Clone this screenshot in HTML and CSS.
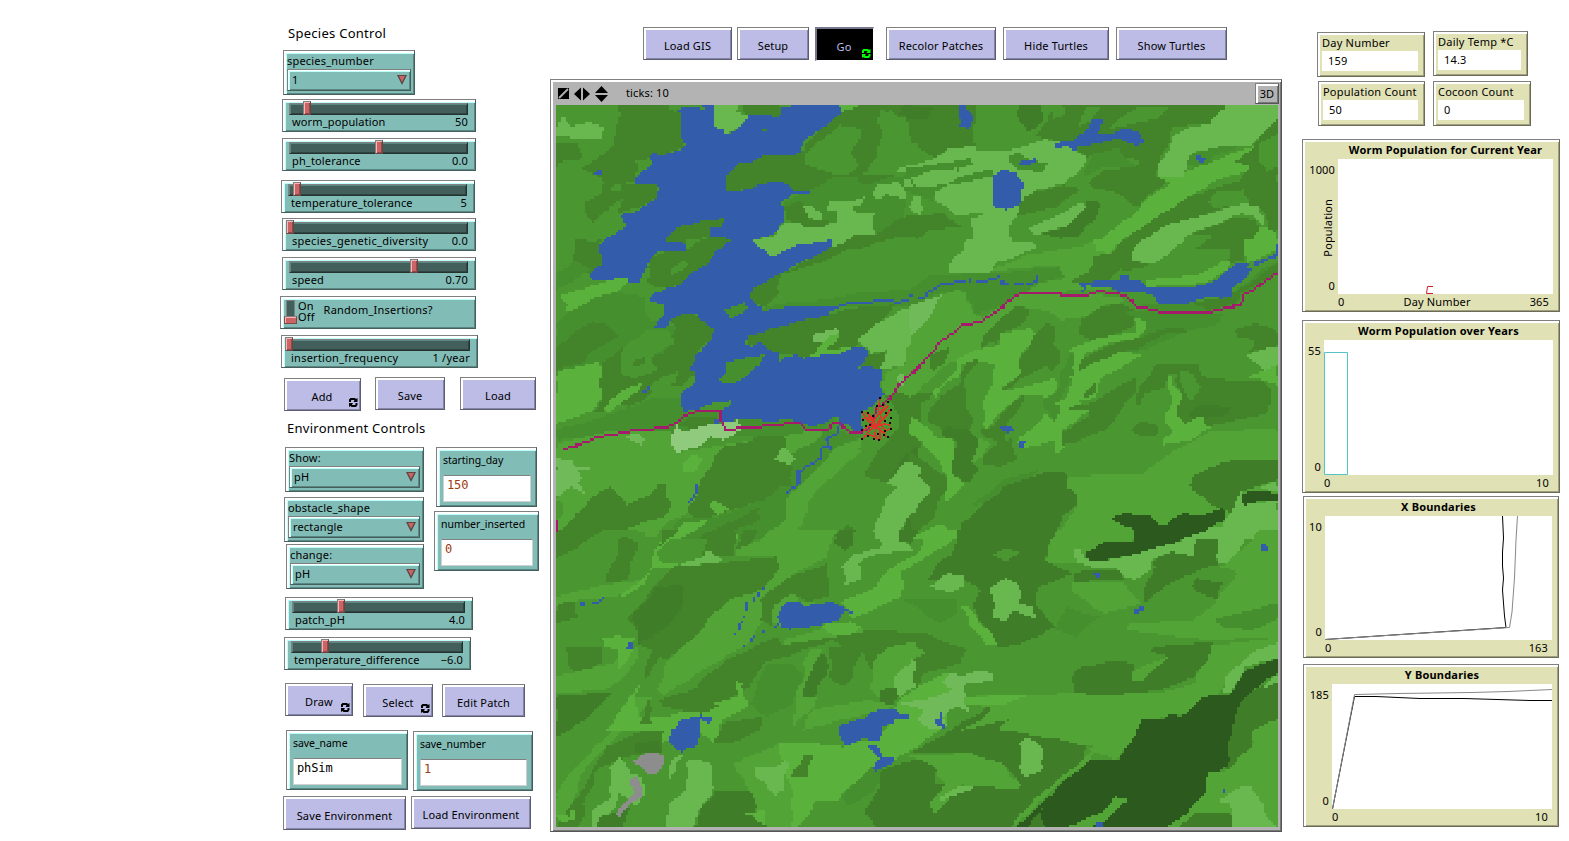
FILE: index.html
```html
<!DOCTYPE html>
<html lang="en">
<head>
<meta charset="utf-8">
<title>Worm Model</title>
<link rel="stylesheet" href="styles.css">
</head>
<body>
<svg class="defs" width="0" height="0">
  <symbol id="loop" viewBox="0 0 9 9"><path d="M0 4V1.5L1.5 0H6L7 1L8.500 0V4H4.500L5.500 2.500L5 2H2.500L2 2.500V4ZM0 5H4L3 6.500L3.500 7H6L6.500 6.500V5H8.500V7L7 9H2.500L1.500 8L0 9Z"/></symbol>
</svg>
<div class="app">
  <section class="controls">
    <h2 class="note note-species">Species Control</h2>
    <div class="widget chooser ch-species"><span>species_number</span><div class="pick"><span>1</span><i class="tri"></i></div></div>
    <div class="widget slider s1"><div class="track"><i class="knob"></i></div><p><span>worm_population</span><span>50</span></p></div>
    <div class="widget slider s2"><div class="track"><i class="knob"></i></div><p><span>ph_tolerance</span><span>0.0</span></p></div>
    <div class="widget slider s3"><div class="track"><i class="knob"></i></div><p><span>temperature_tolerance</span><span>5</span></p></div>
    <div class="widget slider s4"><div class="track"><i class="knob"></i></div><p><span>species_genetic_diversity</span><span>0.0</span></p></div>
    <div class="widget slider s5"><div class="track"><i class="knob"></i></div><p><span>speed</span><span>0.70</span></p></div>
    <div class="widget switch"><div class="groove"><i></i></div><div class="onoff"><span>On</span><span>Off</span></div><span class="sw-name">Random_Insertions?</span></div>
    <div class="widget slider s6"><div class="track"><i class="knob"></i></div><p><span>insertion_frequency</span><span>1 /year</span></p></div>
    <div class="row row-add">
      <button class="btn b-add">Add<svg class="loop"><use href="#loop"/></svg></button>
      <button class="btn b-save">Save</button>
      <button class="btn b-load">Load</button>
    </div>
    <h2 class="note note-env">Environment Controls</h2>
    <div class="row row-env">
      <div class="stack">
        <div class="widget chooser ch-show"><span>Show:</span><div class="pick"><span>pH</span><i class="tri"></i></div></div>
        <div class="widget chooser ch-shape"><span>obstacle_shape</span><div class="pick"><span>rectangle</span><i class="tri"></i></div></div>
        <div class="widget chooser ch-change"><span>change:</span><div class="pick"><span>pH</span><i class="tri"></i></div></div>
      </div>
      <div class="stack">
        <div class="widget input in-day"><span>starting_day</span><div class="field num">150</div></div>
        <div class="widget input in-num"><span>number_inserted</span><div class="field num">0</div></div>
      </div>
    </div>
    <div class="widget slider s7"><div class="track"><i class="knob"></i></div><p><span>patch_pH</span><span>4.0</span></p></div>
    <div class="widget slider s8"><div class="track"><i class="knob"></i></div><p><span>temperature_difference</span><span>−6.0</span></p></div>
    <div class="row row-draw">
      <button class="btn b-draw">Draw<svg class="loop"><use href="#loop"/></svg></button>
      <button class="btn b-select">Select<svg class="loop"><use href="#loop"/></svg></button>
      <button class="btn b-edit">Edit Patch</button>
    </div>
    <div class="row row-name">
      <div class="widget input in-name"><span>save_name</span><div class="field">phSim</div></div>
      <div class="widget input in-snum"><span>save_number</span><div class="field num">1</div></div>
    </div>
    <div class="row row-envbtn">
      <button class="btn b-senv">Save Environment</button>
      <button class="btn b-lenv">Load Environment</button>
    </div>
  </section>

  <main class="world">
    <nav class="toolbar">
      <button class="btn b-gis">Load GIS</button>
      <button class="btn b-setup">Setup</button>
      <button class="btn b-go">Go<svg class="loop"><use href="#loop"/></svg></button>
      <button class="btn b-recolor">Recolor Patches</button>
      <button class="btn b-hide">Hide Turtles</button>
      <button class="btn b-show">Show Turtles</button>
    </nav>
    <div class="view">
      <header class="viewbar">
        <svg width="52" height="16" viewBox="0 0 52 16"><path d="M0 2H11V13H0Z"/><path d="M1 12L10 3" stroke="#b3b3b3" stroke-width="1.800"/><path d="M16 8L23 1.500V14.500ZM32 8L25 1.500V14.500ZM37 7L43.500 0L50 7ZM37 9L43.500 16L50 9Z"/></svg>
        <span class="ticks">ticks: 10</span>
        <button class="threed">3D</button>
      </header>
      <div class="map">
        <canvas id="patches" width="301" height="301"></canvas>
        <svg class="turtles" viewBox="860 395 34 48" width="34" height="48">
          <path class="trail" d="M876 426L881 417 878 409 880 399M876 426L882 420 887 415 890 409M876 426L884 424 890 425M876 426L883 432 886 437M876 426L875 434 878 440M876 426L870 430 863 439M876 426L868 421 862 412M876 426L869 426 863 431M876 426L872 418 868 414M884 405L880 414 888 406M884 432L891 428M874 422L867 418 862 419M878 421L886 431M876 437L870 435 864 436M880 440L880 429 873 428M866 412L873 422 879 413"/>
          <path class="bug" d="M879 397h2v2h-2zM887 401h2v2h-2zM882 404h2v2h-2zM890 409h2v2h-2zM885 412h2v2h-2zM876 405h2v2h-2zM861 411h2v2h-2zM867 412h2v2h-2zM862 419h2v2h-2zM872 415h2v2h-2zM890 417h2v2h-2zM889 422h2v2h-2zM890 428h2v2h-2zM884 430h2v2h-2zM887 436h2v2h-2zM883 434h2v2h-2zM878 439h2v2h-2zM873 438h2v2h-2zM861 438h2v2h-2zM861 429h2v2h-2zM867 435h2v2h-2zM869 424h2v2h-2zM865 425h2v2h-2zM884 420h2v2h-2zM877 433h2v2h-2z"/>
        </svg>
      </div>
    </div>
  </main>

  <aside class="outputs">
    <div class="monitors">
      <div class="out monitor m-day"><span>Day Number</span><div>159</div></div>
      <div class="out monitor m-temp"><span>Daily Temp *C</span><div>14.3</div></div>
      <div class="out monitor m-pop"><span>Population Count</span><div>50</div></div>
      <div class="out monitor m-coc"><span>Cocoon Count</span><div>0</div></div>
    </div>
    <div class="out plot p1">
      <h3>Worm Population for Current Year</h3>
      <div class="yaxis"><span>1000</span><span class="yname">Population</span><span>0</span></div>
      <svg class="area" viewBox="0 0 215 135"><path d="M95 127.500H89.500L88.500 134.500H95" stroke="#c8202c" fill="none"/></svg>
      <div class="xaxis"><span>0</span><span>Day Number</span><span>365</span></div>
    </div>
    <div class="out plot p2">
      <h3>Worm Population over Years</h3>
      <div class="yaxis"><span>55</span><span>0</span></div>
      <svg class="area" viewBox="0 0 229 135"><path d="M0.500 12.500H23.500V134.500H0.500Z" stroke="#54c4c4" fill="none"/></svg>
      <div class="xaxis"><span>0</span><span>10</span></div>
    </div>
    <div class="out plot p3">
      <h3>X Boundaries</h3>
      <div class="yaxis"><span>10</span><span>0</span></div>
      <svg class="area" viewBox="0 0 227 124" fill="none"><path d="M0 123.500L181 111.500L179.500 100L177.500 74L178.500 62L177.500 50V36L178.500 22L177.500 0" stroke="#000"/><path d="M0 123.500L184.500 111.500L187 96L189.500 62L191 24L192.500 0" stroke="#888"/></svg>
      <div class="xaxis"><span>0</span><span>163</span></div>
    </div>
    <div class="out plot p4">
      <h3>Y Boundaries</h3>
      <div class="yaxis"><span>185</span><span>0</span></div>
      <svg class="area" viewBox="0 0 220 125" fill="none"><path d="M0.500 125L22.500 12.500H44L88 14.500H132L198 16.500H220" stroke="#000"/><path d="M0.500 125L22.500 10.500L66 9.500L140 8.500L176 7.500L220 5.500" stroke="#888"/></svg>
      <div class="xaxis"><span>0</span><span>10</span></div>
    </div>
  </aside>
</div>
<script src="terrain.js"></script>
</body>
</html>
```
FILE: styles.css
```css
* { box-sizing: border-box; }
body { margin: 0; background: #fff; color: #000; font: 11px/14px "Noto Sans", "DejaVu Sans", sans-serif; letter-spacing: .15px; overflow: hidden; }
h2, h3, p { margin: 0; }
.defs { position: absolute; }
.app { display: flex; width: 1569px; height: 841px; }
.controls { width: 550px; padding: 26px 0 0 280px; display: flex; flex-direction: column; align-items: flex-start; }
.row { display: flex; align-items: flex-start; }
.stack { display: flex; flex-direction: column; align-items: flex-start; }

.note { font-weight: 400; font-size: 13px; line-height: 14px; letter-spacing: .27px; white-space: nowrap; }
.note-species { margin: 0 0 10px 8px; }
.note-env { margin: 10px 0 12px 7px; }

.widget { background: #82bcb6; border: 1px solid #808080; border-right-color: #465f5c; border-bottom-color: #465f5c; box-shadow: inset 1px 1px #fff, inset 2px 2px #fff, inset 3px 3px #bdfffa, inset -1px -1px #5a8782; white-space: nowrap; }

.chooser { width: 140px; height: 45px; padding: 4px 3px 3px 3px; }
.chooser > span { display: block; height: 14px; line-height: 12px; letter-spacing: .2px; }
.pick { display: flex; align-items: center; justify-content: space-between; height: 22px; padding: 0 3px 0 4px; border: 1px solid #808080; border-right-color: #465f5c; border-bottom-color: #465f5c; box-shadow: inset 1px 1px #fff, inset 2px 2px #bdfffa, inset -1px -1px #5a8782; }
.tri { width: 10px; height: 10px; background: #5b4645; clip-path: polygon(0 0, 100% 0, 50% 100%); position: relative; }
.tri::after { content: ""; position: absolute; inset: 1px 2px 3px; background: #cb6464; clip-path: polygon(0 0, 100% 0, 50% 100%); }
.ch-species { width: 132px; margin-left: 3px; }
.ch-show { width: 139px; margin-left: 5px; }
.ch-shape { width: 140px; margin: 5px 0 2px 4px; }
.ch-change { width: 138px; margin-left: 6px; }

.slider { width: 194px; height: 33px; padding: 3px 7px 0 6px; }
.track { height: 12px; background: #435f5b; border: 1px solid #808080; border-right-color: #243330; border-bottom-color: #243330; box-shadow: inset 1px 1px #5a8782, inset -1px -1px #304542; }
.knob { display: block; width: 8px; height: 14px; margin-top: -3px; background: #cb6464; border: 1px solid #6a4545; border-top-color: #808080; border-left-color: #808080; box-shadow: inset 1px 1px #ffb4b4, inset -1px -1px #934848; }
.slider p { display: flex; justify-content: space-between; padding: 0 0 0 3px; line-height: 14px; }
.s1 { margin: 4px 0 0 2px; } .s1 .knob { margin-left: 13px; }
.s2 { margin: 6px 0 0 2px; } .s2 .knob { margin-left: 85px; }
.s3 { margin: 9px 0 0 1px; } .s3 .knob { margin-left: 4px; }
.s4 { margin: 5px 0 0 2px; } .s4 .knob { margin-left: -4px; }
.s4 p { letter-spacing: .28px; }
.s5 { margin: 6px 0 0 2px; } .s5 .knob { margin-left: 120px; }
.s6 { width: 197px; margin: 6px 0 0 1px; } .s6 .knob { margin-left: -4px; }
.s6 p { letter-spacing: .25px; }
.s7 { width: 188px; margin: 8px 0 0 5px; } .s7 .knob { margin-left: 44px; }
.s8 { width: 187px; margin: 7px 0 0 4px; } .s8 .knob { margin-left: 29px; }

.switch { display: flex; width: 196px; height: 33px; margin-top: 6px; padding: 3px 4px; }
.groove { width: 9px; height: 22px; margin-left: 1px; background: #435f5b; border: 1px solid #808080; }
.groove i { display: block; width: 13px; height: 8px; margin: 15px 0 0 -3px; background: #cb6464; border: 1px solid #7c4848; border-top-color: #808080; box-shadow: inset 1px 1px #ffb4b4; }
.onoff { display: flex; flex-direction: column; margin-left: 3px; line-height: 11px; }
.sw-name { margin: 3px 0 0 9px; letter-spacing: .22px; }

.btn { display: flex; align-items: center; justify-content: center; position: relative; height: 33px; padding: 5px 0 0; font: inherit; letter-spacing: inherit; color: #000; background: #bcbce6; border: 1px solid #808080; border-right-color: #5c5c72; border-bottom-color: #5c5c72; box-shadow: inset 1px 1px #fff, inset 2px 2px #fff, inset -1px -1px #8585a6; white-space: nowrap; }
.loop { position: absolute; right: 2px; bottom: 3px; width: 9px; height: 9px; }
.row-add { margin: 9px 0 0 4px; }
.b-add { width: 77px; margin: 1px 14px 0 0; padding-right: 1px; }
.b-save { width: 70px; margin-right: 15px; }
.b-load { width: 76px; }
.row-env { gap: 10px; }
.input { height: 60px; padding: 6px 5px 0 6px; letter-spacing: 0; }
.input > span { display: block; height: 21px; line-height: 12px; font-size: 10.5px; letter-spacing: -.05px; }
.field { height: 27px; padding: 1px 3px; background: #fff; border: 1px solid #d0d0d0; border-top-color: #808080; font: 12px/17px "DejaVu Sans Mono", monospace; letter-spacing: -.1px; }
.num { color: #9c3a0e; }
.in-day { width: 101px; margin-left: 2px; }
.in-num { width: 105px; margin-top: 4px; }
.row-draw { margin: 13px 0 0 5px; }
.b-draw { width: 68px; margin-right: 10px; }
.b-select { width: 70px; margin: 1px 9px 0 0; }
.b-edit { width: 83px; margin-top: 1px; }
.row-name { margin: 13px 0 0 6px; }
.in-name { width: 122px; margin-right: 5px; }
.in-snum { width: 120px; margin-top: 1px; }
.row-envbtn { margin: 5px 0 0 3px; }
.b-senv { width: 123px; height: 34px; margin-right: 5px; }
.b-lenv { width: 120px; }

.world { width: 732px; padding-top: 27px; }
.toolbar { display: flex; height: 52px; padding-left: 93px; align-items: flex-start; }
.b-gis { width: 89px; margin-right: 5px; }
.b-setup { width: 72px; margin-right: 6px; }
.b-go { width: 59px; height: 34px; margin-right: 12px; padding: 5px 2px 0 0; background: #000; color: #bcbce6; border: 2px solid #76768f; border-right: 1px solid #fff; border-bottom: 1px solid #fff; box-shadow: none; }
.b-go .loop { fill: #0f0; right: 2px; bottom: 2px; }
.b-recolor { width: 110px; margin-right: 7px; }
.b-hide { width: 106px; margin-right: 7px; }
.b-show { width: 111px; }
.view { width: 732px; height: 753px; padding: 2px 2px 2px 5px; background: #b3b3b3; border: 1px solid #808080; border-right-color: #555; border-bottom-color: #555; box-shadow: inset 2px 2px #fff, inset -1px -1px #777; }
.viewbar { display: flex; align-items: center; height: 23px; padding: 0 0 0 2px; }
.ticks { margin: -1px 0 0 16px; flex: 1; }
.threed { width: 24px; height: 21px; padding: 0; background: #b3b3b3; font: 11px/16px "Noto Sans", sans-serif; border: 1px solid #808080; border-right-color: #555; border-bottom-color: #555; box-shadow: inset 2px 2px #fff, inset -1px -1px #777; }
.map { position: relative; width: 722px; height: 722px; }
.map canvas { display: block; width: 722px; height: 722px; image-rendering: pixelated; }
.turtles { position: absolute; left: 304px; top: 290px; shape-rendering: crispEdges; }
.trail { fill: none; stroke: #e0362a; stroke-width: 1.500; }
.bug { fill: #140500; }

.outputs { padding: 31px 0 0 20px; }
.out { background: #e0e1b5; border: 1px solid #808080; border-right-color: #6b6b56; border-bottom-color: #6b6b56; box-shadow: inset 2px 2px #fff, inset -1px -1px #a0a080; white-space: nowrap; }
.monitors { display: grid; grid-template-columns: 116px auto; grid-template-rows: 50px 58px; padding-left: 15px; align-items: start; justify-content: start; }
.monitor { height: 45px; padding: 4px 6px 5px 4px; }
.monitor > span { display: block; line-height: 12px; height: 14px; letter-spacing: .22px; }
.monitor div { height: 20px; padding-left: 6px; background: #fff; line-height: 19px; }
.m-day { width: 108px; margin-top: 1px; }
.m-temp { width: 95px; }
.m-pop { width: 107px; margin-left: 1px; }
.m-coc { width: 98px; }
.plot { display: grid; }
.plot h3 { grid-column: 2; text-align: center; font-size: 11px; font-weight: 700; line-height: 19px; letter-spacing: .2px; }
.area { display: block; width: 100%; height: 100%; background: #fff; grid-column: 2; }
.yaxis { display: flex; flex-direction: column; justify-content: space-between; align-items: flex-end; padding: 4px 3px 1px 0; }
.yname { writing-mode: vertical-rl; transform: rotate(180deg); line-height: 14px; }
.xaxis { grid-column: 2; display: flex; justify-content: space-between; padding: 1px 4px 0 0; }
.p1 { width: 258px; height: 173px; grid-template: 19px 135px 17px / 35px 215px; }
.p2 { width: 258px; height: 173px; margin-top: 8px; grid-template: 19px 135px 17px / 21px 229px; }
.p3 { width: 256px; height: 162px; margin: 3px 0 6px 1px; grid-template: 19px 124px 17px / 21px 227px; }
.p4 { width: 256px; height: 163px; margin-left: 1px; grid-template: 19px 125px 17px / 28px 220px; }
```
FILE: terrain.js
```js
// Paints the GIS patches: every sheet has its own origin and scale, every
// shape is "colour x,y x,y ..." and lines start with "~".
const COLORS = {
  m: '#4a9631', h: '#468f2e', d: '#43842b', D: '#3f7d29', l: '#51a435', b: '#5ab13c',
  p: '#69b84f', P: '#70ba59', s: '#90cb7d', F: '#2c591d', w: '#335daa', g: '#8d8d8d', r: '#a61a6b'
};
const SHEETS = [
{ o: [545, 20], s: [3, 3], shapes: `
d 220,255 410,255 410,380 360,405 320,405 300,420 270,420 280,455 270,485 235,490 210,495 205,515 250,510 230,535 190,560 160,600 150,608 120,580 120,550 170,520 175,490 160,470 110,445 160,415 200,370 220,340
d 33,370 100,370 110,415 50,425 33,440
d 230,490 330,490 345,530 300,555 230,580
m 270,420 320,420 315,440 285,465
p 33,345 40,310 55,285 75,310 85,320 130,305 175,325 170,355 100,355 33,348
m 370,255 410,255 400,275 375,268
d 90,690 90,655 130,665 175,660 160,690
d 600,255 700,255 700,290 600,290
b 885,255 935,255 920,270 885,275
d 740,405 775,390 830,325 885,275 930,262 935,255 1110,255 1110,300 1060,290 1010,270 1000,310 1020,350 990,400 980,450 940,470 870,480 860,510 810,515 740,510 730,495 700,490 560,515 545,510 545,465 580,430 660,405
m 810,375 890,315 940,325 940,370 925,400 940,440 900,465 870,465 800,440 775,430 775,405
m 1000,300 1040,265 1060,300 1075,340 1110,370 1110,440 1040,465 980,465 975,440 1000,380 1020,350
D 1060,280 1080,262 1110,265 1110,300
h 720,545 800,510 870,470 1110,470 1110,580 990,640 720,600
d 940,465 1045,465 980,490 945,490
d 720,560 770,540 790,600 860,600 830,628 780,620 725,600
p 985,520 1000,490 1060,488 1100,510 1080,535 1040,530 1030,515 1010,540
p 1045,460 1070,440 1110,445 1110,460
p 630,670 660,650 690,650 720,605 760,605 780,625 820,625 870,605 875,575 845,570 845,545 930,540 960,530 955,550 930,560 930,575 980,580 990,640 930,645 880,680 850,660 800,670 780,665 750,672 710,690 640,690
p 770,560 800,560 840,585 835,600 790,595
d 870,690 930,645 990,642 1060,600 1110,580 1110,640 1000,665 940,690
w 408,270 430,258 450,262 470,268 472,255 508,255 510,325 530,325 535,340 560,340 610,287 660,285 700,290 705,262 740,262 740,255 885,255 885,280 830,325 780,365 760,400 740,405 660,405 625,428 580,432 545,465 545,512 565,518 640,500 655,490 705,487 725,490 740,512 808,512 800,520 740,522 710,545 718,560 715,605 690,645 660,650 630,665 640,680 660,695 165,695 180,660 235,620 230,585 270,575 340,535 340,505 325,490 270,490 275,475 315,440 315,420 300,415 320,402 360,405 410,385 415,355 408,350
d 360,655 400,620 480,600 535,595 530,620 500,625 495,650 550,655 550,695 430,695 420,665 360,665
m 425,660 490,652 480,695 425,695
p 508,255 580,255 575,275 610,287 600,300 560,335 535,340 530,325 510,325
w 148,455 172,450 172,465 152,465
d 660,327 672,327 672,333 660,333` },
{ o: [905, 20], s: [3, 3], shapes: `
d 0,255 218,255 205,300 205,390 120,390 90,415 30,370 0,375
m 0,300 15,310 10,370 30,385 70,400 90,415 0,440
D 0,255 75,265 70,295 0,300
d 400,350 415,310 440,255 810,255 960,255 920,310 795,320 800,360 770,400 755,470 790,480 750,510 700,560 680,550 670,520 560,500 545,490 600,450 690,440 700,420 620,400 545,410 500,380 440,360
m 430,255 470,255 480,285 440,298
m 630,300 700,260 800,262 760,295 700,310 620,325
m 540,265 600,258 560,300 520,320
h 560,400 640,385 690,440 600,440 540,470
D 342,258 410,255 405,310 375,340 345,310
p 0,440 90,415 130,385 210,378 215,395 300,395 420,358 490,375 540,410 540,440 480,490 400,510 360,540 325,600 310,680 210,690 205,640 195,600 240,580 150,585 90,540 85,515 20,510 0,500
h 0,445 110,430 200,415 212,430 160,445 155,470 260,447 265,470 130,495 85,515 85,540 0,530 0,500 30,500 25,475 0,480
p 25,475 60,455 155,445 160,470 130,490 40,503
h 312,405 340,400 360,415 430,430 410,455 350,450 310,420
m 0,590 0,510 85,545 150,585 200,585 195,690 0,690
p 10,560 25,530 50,530 60,570 40,585
d 0,590 110,580 170,620 80,630 40,655 0,650
d 330,590 340,550 380,520 480,495 530,510 460,560 370,580
m 320,690 330,600 460,560 530,500 600,515 640,530 690,570 600,640 560,690
D 415,640 480,620 540,560 550,540 580,545 570,600 520,650 470,655
p 365,625 430,600 540,545 540,560 480,620 380,645
d 545,500 600,450 690,470 715,510 710,560 680,555 630,515
b 565,690 600,640 690,580 760,510 800,490 760,475 850,450 930,420 1040,378 1040,450 950,475 850,530 740,600 620,690
d 625,690 740,600 850,530 1000,480 1040,440 995,425 1080,340 1119,290 1119,640 1090,625 1085,570 1000,550 850,600 700,665 690,690
m 1060,370 1119,340 1119,440 1080,455 1060,420
m 910,545 930,515 1020,510 1030,550 930,565
p 760,470 765,430 810,350 850,325 920,310 960,255 1119,255 1119,290 1080,340 1030,380 990,375 880,395 845,430 830,470
h 845,430 870,400 950,378 990,375 1000,385 920,410 905,435 870,440
d 780,690 870,640 1000,590 1050,600 1060,640 1030,690
m 730,690 800,655 900,640 930,650 860,690
p 685,690 710,660 800,610 900,585 1010,550 1060,560 1080,590 1070,620 1050,590 1010,580 850,645 780,690
b 1030,690 1060,620 1090,625 1119,640 1119,690
w 165,255 185,258 198,290 190,325 162,320
w 264,470 290,450 335,455 357,500 345,550 303,570 265,555
w 445,370 485,360 510,360 560,300 592,298 580,340 620,345 660,325 700,335 716,365 700,375 675,373 640,355 580,370 525,380 510,398 500,378 445,383
w 348,420 380,418 395,405 398,420 380,433 348,433
w 882,405 905,415 890,430 882,425` },
{ o: [550, 240], s: [3, 3], shapes: `
d 80,30 140,0 155,0 145,75 122,98 70,110
h 18,100 80,60 120,90 40,140 18,160
h 18,250 120,170 200,155 280,170 300,240 380,260 340,340 200,350 18,440
d 18,330 60,290 120,245 180,255 200,290 130,330 100,370 50,380 18,395
d 340,340 380,260 350,235 400,222 450,235 485,270 485,300 435,345 415,385 440,400 400,440 340,430 280,480 240,500 200,480 160,515 140,515 150,480 155,370 200,340 220,320 300,350
m 205,350 240,310 290,270 360,270 370,310 300,350 320,390 300,400 250,415 210,400
d 250,365 280,352 285,370 260,385
m 290,450 330,410 390,395 380,430 310,450
b 35,165 150,130 200,108 235,110 230,135 200,155 130,175 65,215 50,210 55,195 35,185
d 290,80 310,50 350,35 410,30 450,0 540,0 500,35 470,75 420,100 385,135 330,145 295,130
m 360,85 400,60 420,75 370,105
b 18,420 30,395 150,365 155,410 150,460 135,510 40,545 18,555
b 160,510 180,480 240,435 270,432 265,450 220,490 180,515
h 250,500 300,475 395,475 400,515 600,515 850,530 850,600 290,580 200,585 18,600 18,570 120,545 200,515
l 18,610 200,570 300,575 370,570 370,640 800,570 830,580 740,650 720,740 450,790 400,830 360,840 320,890 18,900
b 395,680 440,640 460,660 430,695 400,700
d 380,560 410,530 505,530 500,550 440,565
P 220,590 260,580 285,600 280,615 250,605
d 18,900 50,850 120,780 185,740 210,780 230,795 290,770 320,730 345,735 360,790 340,830 270,850 200,880 130,900
m 18,780 50,790 45,820 18,835
m 210,885 250,870 290,880 280,900 210,900
P 18,655 60,660 70,680 125,685 115,690 85,690 100,710 80,730 105,765 60,740 18,775
s 365,600 380,555 400,575 480,555 540,545 565,540 565,570 520,600 480,590 440,620 370,640
h 400,830 500,830 640,775 640,690 730,640 860,570 930,590 860,620 800,690 720,760 700,840 640,900 330,900
d 460,720 490,650 530,620 600,605 630,590 700,590 710,620 675,660 725,680 720,740 690,740 635,780 600,790 480,830 430,830 415,800
d 470,880 560,840 630,800 635,840 580,860 480,900 450,900
p 675,660 700,620 735,655 715,675
l 640,900 700,840 720,760 800,690 860,620 930,595 930,640 850,700 770,790 765,850 700,900
b 480,795 500,780 540,805 500,825
b 330,900 400,850 470,840 440,870 380,900
b 540,880 560,875 565,900 545,900
l 1000,400 1110,350 1110,470 1005,470
d 1000,465 1050,460 1110,480 1110,660 1060,670 1010,730 945,710 960,660 1000,620 1050,560 1040,500
D 1070,640 1110,620 1110,670 1040,690 1005,740
p 1010,730 1060,670 1110,670 1110,840 1060,845 1030,900 970,900 985,850 1000,780 1050,740
D 1045,880 1070,835 1110,830 1110,900 1045,900
d 850,890 890,855 915,865 915,900
h 630,205 690,190 830,180 940,155 1110,150 1110,200 865,200 640,215
d 605,140 690,100 690,160 640,200 612,190
d 585,290 690,255 835,225 900,205 1030,195 1000,235 940,290 920,320 830,330 760,355 735,345 685,345 630,310 590,320
P 790,285 860,265 865,275 840,290 820,310 790,308
b 800,340 830,290 865,280 850,310 830,330 925,320 910,335 770,355
p 925,300 960,265 1040,215 1110,190 1110,270 1075,320 1060,380 985,385 1010,345 1020,330 960,340
l 1075,320 1110,270 1110,350 1060,390
d 925,380 955,345 1010,335 1010,350 985,385
P 1040,410 1070,395 1075,420 1050,440
d 790,50 850,20 890,0 960,0 900,25 800,70 680,105
p 615,0 850,0 850,12 780,15 740,15 700,35 668,55 640,25
p 850,0 890,0 880,12 850,20
w 165,0 340,0 345,5 408,8 405,30 330,35 290,75 270,100 270,125 235,128 235,112 200,110 180,118 130,118 122,98 145,75 150,30
w 540,0 615,5 640,30 668,50 700,35 740,15 850,0 850,20 790,50 720,80 680,105 640,125 605,145 612,180 640,212 725,200 865,198 865,207 835,215 835,225 760,240 690,258 640,275 590,290 585,310 600,320 630,308 660,330 690,340 685,365 710,350 735,345 760,355 870,340 920,320 945,325 955,345 945,370 925,385 960,380 990,390 997,430 1003,465 960,500 935,510 940,570 915,572 890,550 865,548 860,535 845,530 830,545 790,558 760,555 730,540 700,540 680,545 610,540 560,535 545,545 515,548 500,552 492,545 510,535 510,515 480,500 400,515 395,490 385,480 385,462 435,430 440,400 415,385 435,345 455,335 485,300 485,270 450,235 440,222 360,235 350,260 330,268 315,260 320,245 340,220 340,195 310,185 290,180 310,158 385,135 420,100 470,75 500,35
d 360,235 400,222 435,224 450,240 360,250
h 500,420 530,395 530,365 560,360 640,345 625,375 590,410 550,430 505,425
h 530,210 590,185 590,205 540,238
m 450,505 480,492 540,482 540,495 500,512 480,508 450,512
~w 860,203 890,190 950,192 990,178 1020,178 1045,192 1065,178 1075,180
~w 1080,166 1087,166
~w 1095,175 1110,175
~w 868,555 862,580 835,595 835,622 815,625 810,655 770,680 744,700 742,735 715,757
~w 744,690 748,725
~w 830,600 842,625
~w 440,735 435,765 418,785
~w 279,455 288,455 296,443` },
{ o: [910, 240], s: [3, 3], shapes: `
h 0,185 0,150 60,105 250,100 450,80 455,110 380,130 330,160 270,200 185,225 185,190 150,150 90,160
p 112,98 115,70 160,30 165,0 290,0 380,10 380,25 330,45 260,70 240,95 115,98
l 240,92 350,45 500,20 560,0 630,0 600,45 550,60 530,95 480,130 600,120 715,140 500,150 330,165 380,130 455,115 450,80 380,80
b 550,0 630,0 600,40 570,35
d 480,130 530,95 550,50 600,40 640,0 690,0 660,45 670,70 630,90 600,120
d 660,65 730,68 690,85 640,90
p 660,40 680,10 720,0 830,0 780,40 730,68 670,65
d 940,0 1010,0 1000,60 950,70 965,40
b 1010,0 1104,0 1104,20 1040,60 1000,70 1010,20
b 710,120 860,105 950,60 960,60 950,90 880,130 715,140
P 0,195 95,165 60,230 0,290
l 0,290 60,230 95,165 130,150 165,155 185,220 220,235 330,165 530,165 640,170 650,185 590,195 520,230 460,240 440,225 370,205 320,200 280,230 215,290 215,325 180,345 120,370 0,460
d 0,470 40,455 70,460 60,480 0,505
d 60,345 115,320 110,370 70,395
d 215,325 215,290 280,230 320,200 360,205 340,250 275,280 270,315 245,305
b 275,280 370,265 380,280 335,340 330,400 275,440 285,455 350,440 400,425 440,415 440,450 410,470 330,465 255,530 235,565 220,560 220,490 245,430 255,375 195,360 150,375 145,415 120,420 90,450 80,475 65,460 130,400 140,360 200,330 275,315
d 335,345 375,285 415,245 430,260 430,310 450,330 445,370 425,400 410,375 340,410 285,455 275,445 330,400
h 470,340 490,345 490,400 460,460 430,550 400,480 440,450 465,380
b 475,330 560,295 670,275 685,225 705,240 705,270 680,295 590,310 530,340 500,400 490,400 490,345
d 505,260 510,240 580,200 620,190 690,215 670,255 610,285 540,300 510,280
h 640,215 940,220 930,250 830,275 700,330 630,340 700,290 710,245
d 505,400 520,360 580,320 700,290 780,262 830,265 830,280 780,275 690,325 640,335 550,375
b 480,470 480,410 500,400 550,370 640,335 690,345 630,385 585,405 570,445 550,475 500,480 540,510 520,530 460,570 465,620 450,640 435,640 435,600 330,628 330,595 410,520 430,550 450,500 435,490
d 520,460 560,430 560,455 525,475
d 470,500 520,495 545,485 640,430 680,415 680,450 620,530 580,570 500,605 455,615 460,575 540,530 535,505 475,512
d 50,520 90,470 160,430 150,395 170,365 200,360 205,370 165,400 165,480 190,540 180,570 100,570 60,545
D 95,590 100,560 180,570 205,600 190,660 200,690 180,725 130,730 125,660 145,600
b 0,530 50,560 70,590 140,600 130,650 125,700 165,730 130,770 115,785 105,760 110,710 60,630 0,580
d 0,625 60,680 110,710 105,760 60,840 0,900
p 0,665 25,680 30,710 65,745 30,780 20,820 0,825
l 185,670 205,590 240,610 220,650
d 220,650 270,605 310,595 310,660 270,680 220,675
d 220,590 220,570 250,560 300,490 340,465 320,520 290,560 270,610
d 670,570 700,540 745,560 730,590 690,590
d 680,500 690,440 740,375 870,375 880,410 950,420 1060,420 1090,480 1070,520 960,545 890,560 820,550 795,530 810,460 800,400 775,400 770,440 700,490
m 690,500 710,460 780,440 790,500 770,550 690,530
m 805,390 850,400 865,440 850,480 830,470
D 830,530 870,495 960,500 955,525 850,540
l 470,715 600,700 700,705 760,650 900,575 1104,565 1104,900 430,900 500,800 470,750
b 775,410 790,410 800,445 815,465 800,530 820,550 880,525 890,555 910,560 840,600 765,615 765,595 795,575 765,550 780,490
h 180,800 280,720 330,705 390,690 330,740 250,780
D 140,900 160,850 280,740 390,700 460,695 475,710 465,740 500,770 500,795 460,830 430,880 430,900
D 845,740 850,710 890,685 960,662 1104,662 1104,720 1000,755 960,820 920,800 860,760
F 607,835 640,820 710,825 760,860 820,820 880,825 940,805 945,840 890,865 870,890 800,900 670,900 670,870 630,855
p 800,900 890,865 940,860 950,825 1000,755 1000,795 1104,780 1104,860 1060,900
p 1055,745 1104,720 1104,755
F 1000,760 1060,750 1104,765 1104,780 1040,785 1000,795
d 975,270 1040,250 1075,260 1104,290 1104,320 1020,335 1030,300 985,290
p 1010,345 1104,318 1104,375 1060,395 1030,365
b 1010,410 1104,375 1104,440 1060,420
b 0,900 90,850 140,880 130,900
h 690,195 740,190 930,180 1104,60 1104,100 1000,160 990,190 900,215 750,215
d 840,190 960,165 1104,70 1104,95 990,160 990,185 900,212
w 515,130 570,120 630,122 630,108 650,108 652,118 685,118 715,140 860,140 910,125 975,68 1010,70 1012,85 1035,82 1035,65 1085,48 1090,20 1104,12 1104,45 1030,85 1010,110 965,150 960,170 930,175 900,170 830,190 745,190 730,170 715,165 700,158 650,160 600,145 560,145 535,135 520,155 512,152 525,142
~w 0,166 10,166
~w 25,175 40,172 60,155 100,130 130,128 140,122 155,125 165,122
~w 178,127 178,118
~w 200,122 245,120 262,115 265,110
~w 200,126 220,126
~w 275,125 293,130
~w 275,129 280,133
~w 315,133 340,133
~w 350,128 365,128 378,125 380,108
w 270,557 305,560 312,572 290,578 270,568
w 333,603 355,603 347,612 345,622 333,622` },
{ o: [550, 530], s: [2.134, 3], shapes: `
d 13,0 120,0 60,70 13,100
m 13,90 110,0 190,0 180,30 140,40 90,160 13,200
d 120,160 150,25 165,20 188,40 180,90 160,150 105,165
l 13,200 110,165 200,150 150,200 60,210 13,230
b 155,195 210,130 225,60 250,0 270,0 230,70 235,100 300,105 290,112 215,115 205,160 160,200
d 240,0 235,50 270,0
d 350,0 395,0 395,80 320,75
d 400,60 410,0 440,0 430,45
l 400,60 450,30 470,0 610,0 590,80 520,130 430,330 330,420 240,500 230,480 250,400 380,210 480,110 480,80 400,80
D 605,40 620,0 655,0 645,45 625,60
d 265,110 350,100 485,80 490,110 450,180 380,210 300,330 250,390 200,350 170,260 210,190
D 180,250 230,170 280,165 285,220 250,290 190,345
p 280,100 325,80 335,60 370,85 360,98 285,108
l 450,210 510,185 530,215 590,220 500,290 450,260
d 450,210 510,140 595,100 595,200 550,215 510,190 475,230 475,290 450,270
p 690,0 750,0 770,60 690,75 660,100 660,150 630,165 625,110 650,75 710,50
D 740,0 790,0 770,40 745,30
b 815,0 870,0 840,50 750,130 750,200 690,240 650,265 620,215 700,170 720,120 780,70
h 750,205 870,205 870,245 830,280 800,250
D 870,0 1080,0 1055,90 1115,130 1040,170 1040,230 1080,290 1000,345 960,350 900,230 920,180 880,150 800,150 820,110 860,70
m 940,75 970,55 1005,65 980,95
p 812,170 850,130 882,135 880,170 850,188
p 945,170 970,145 1000,160 1000,220 1030,230 1032,270 990,240 975,275 945,260
b 878,220 895,235 960,345 930,340 900,290
l 1080,0 1250,0 1240,40 1150,65 1120,100 1055,95
l 1115,160 1220,155 1260,220 1180,250 1120,190
F 1245,0 1400,0 1330,40 1290,60 1240,75 1180,90 1150,90 1150,65 1180,38 1245,35
p 1115,60 1130,50 1150,90 1180,92 1240,75 1300,50 1390,15 1410,0 1510,0 1480,30 1470,90 1430,100 1420,70 1425,25 1380,40 1370,80 1330,65 1285,90 1280,115 1250,150 1225,140 1210,115 1150,110 1125,95
D 1265,215 1290,90 1330,65 1370,80 1385,25 1425,25 1420,80 1430,100 1370,130 1310,170 1270,215
D 1115,130 1150,118 1220,125 1220,150 1120,155
l 1430,110 1480,60 1510,0 1560,0 1560,320 1400,330 1230,300 1240,280 1380,270 1440,180 1470,130
D 1365,170 1375,145 1440,160 1420,210
h 1415,270 1560,215 1560,265 1500,300 1430,290
h 1100,230 1170,260 1120,320 1080,300
d 13,220 50,215 60,260 20,280
d 35,350 110,350 110,400 60,430 35,400
l 13,490 13,440 130,400 190,350 170,430 120,480
D 13,500 130,485 80,570 13,620
b 112,325 140,318 180,322 180,345 160,400 140,420 150,360 115,350
l 500,330 600,290 690,300 600,330 500,345
b 580,285 640,275 660,290 640,312 600,312
d 230,510 300,480 380,390 480,320 500,345 690,300 800,310 890,360 880,400 800,430 780,470 700,500 690,430 660,360 600,330 500,380 450,400 430,470 350,530 320,550 235,530
l 683,470 690,400 720,350 780,335 800,370 770,390 740,430 740,490 700,500
h 460,400 520,400 540,450 520,520 460,560 430,520
d 600,350 660,345 650,440 620,470 595,440
l 520,590 530,480 555,360 580,360 570,440 560,540
D 540,500 545,450 580,370 590,380 590,440 560,505
p 740,500 740,430 770,390 780,400 775,470 745,500
D 697,530 705,480 740,470 740,500 725,530
l 560,540 680,510 740,530 620,570 540,600
b 740,520 780,470 850,425 860,500 850,580 770,660 700,720 650,760 610,810 570,810 530,890 518,890 515,790 490,720 490,640 560,640 620,650 700,620 730,570
h 620,800 690,710 720,720 690,780 640,830
l 390,700 490,640 515,790 518,890 460,890 430,800
d 520,740 540,670 555,680 550,740
P 755,520 830,500 860,480 835,455 850,430 880,440 915,420 945,430 945,450 885,465 880,510 900,550 870,530 840,560 845,590 820,600 785,570 795,540
l 880,500 1120,490 1300,490 1380,460 1400,350 1560,320 1560,350 1440,440 1430,490 1370,550 1270,570 1210,690 1150,660 1170,645 1110,650 980,600 870,610 940,540
b 880,500 1020,497 960,525 880,525
D 1107,450 1130,415 1200,395 1240,400 1250,430 1320,380 1280,365 1290,350 1420,335 1380,440 1310,480 1200,495 1120,490
l 1240,450 1245,425 1320,380 1300,410 1260,450
D 770,670 870,585 940,530 940,545 880,600 980,570 960,600 1090,630 1150,650 1120,720 1050,800 990,890 700,890 670,850 700,780 710,720 780,690 830,700 820,760 920,770 980,770 1000,745 960,700 900,670
l 760,675 900,670 960,700 1005,770 980,775 880,765 820,855 815,810 840,760 825,720 790,690
l 1000,850 1060,780 1150,670 1170,650 1150,690 1040,820 990,890
p 1005,630 1030,625 1052,660 1050,720 1015,740 1005,710
p 832,800 870,770 905,765 900,780 835,812
F 1000,890 1040,830 1150,690 1215,690 1235,640 1270,565 1310,570 1325,550 1350,560 1400,500 1460,490 1480,420 1560,382 1560,425 1500,480 1470,520 1455,680 1430,725 1405,725 1400,780 1360,850 1320,890
D 1020,890 1050,835 1055,890
D 1500,480 1560,445 1560,560 1500,600 1490,680 1440,725 1455,600 1470,520
p 1435,490 1440,440 1500,370 1560,332 1560,382 1480,410 1460,490
p 1510,480 1560,430 1560,455
l 1405,725 1440,725 1500,640 1500,600 1560,560 1560,890 1320,890 1360,850 1400,780
D 1340,890 1380,850 1450,850 1460,890
p 1430,815 1470,768 1500,770 1545,890 1460,890 1455,820
l 1100,890 1170,850 1210,800 1230,810 1190,870 1160,890
l 13,790 60,700 130,610 180,500 220,500 160,600 80,700 50,800 40,860 13,850
b 120,600 190,465 180,560 250,560 400,500 400,455 415,460 410,500 425,530 370,570 345,640 320,600 240,640 200,600
d 195,580 210,500 220,580
d 230,400 200,450 210,380 240,330 235,390
d 230,510 330,500 360,530 320,550 235,530
d 120,650 200,600 240,600 240,660 170,680 100,720 80,800 60,890 13,890 60,800
D 180,640 235,630 240,670 185,670
d 345,640 370,580 450,560 450,600 400,635
p 90,890 90,840 130,800 130,710 150,680 170,730 200,740 200,780 185,830 150,790 110,890
D 105,890 110,860 180,830 150,890
p 248,890 255,820 290,780 295,690 340,695 350,750 340,800 300,890
p 435,740 440,715 490,705 500,685 508,700 495,780 480,795 465,760
p 248,750 260,690 285,670 270,720
D 305,890 350,780 430,785 440,850 460,890
b 13,850 40,860 50,830 50,870 25,875
b 415,850 460,840 455,890 440,860
g 178,695 205,670 237,672 240,715 230,730 210,730
g 172,745 185,740 195,770 193,800 175,820 150,860 142,850 155,820 178,790
w 258,600 275,572 320,555 345,565 340,585 330,572 320,570 325,610 305,650 285,652 280,668 270,660 258,630
w 492,290 490,260 500,218 525,215 550,228 600,215 620,230 640,240 620,250 620,270 580,285 510,298
w 618,590 655,570 680,560 690,545 735,535 745,550 765,555 765,565 735,565 730,580 708,590 705,630 685,635 670,625 655,632 635,650 622,645
w 678,645 700,650 705,685 735,682 735,695 700,725 693,720 693,700 700,690
w 820,568 835,570 843,585 838,598 825,580
w 1519,45 1532,45 1532,65 1519,65
w 1160,130 1178,130 1178,142 1165,138
w 1243,235 1265,228 1265,240 1255,250 1243,248
w 1167,890 1170,876 1182,880 1183,890
w 67,217 77,217 77,226 67,226
w 92,214 105,214 118,195 118,205 105,222 92,220
w 165,340 176,336 176,355 165,355
~w 834,548 834,570
~w 1438,778 1438,786
~w 495,268 483,290
~w 456,173 456,178
~w 445,190 445,197
~w 437,205 435,212
~w 419,218 419,240
~w 414,260 414,262
~w 408,275 403,300
~w 395,312 396,312
~w 456,302 456,308
~w 435,318 430,332
~w 414,347 414,348
~w 640,245 645,245` },
{ o: [550, 240], s: [3, 3], shapes: `
~r 40,627 70,620 95,610 150,590 220,578 265,570 340,565 370,555 415,520 455,513 510,513 515,545 525,570 580,563 665,558 720,550 750,550 768,568 835,570 850,550 868,548 900,577 930,578 960,560 985,500 1020,475 1050,430 1080,405 1110,380
~r 20,842 20,875` },
{ o: [910, 240], s: [3, 3], shapes: `
~r 0,405 40,365 100,300 160,255 215,245 270,205 330,160 445,158 455,165 530,165 570,153 640,165 685,200 750,215 900,217 940,205 995,195 1000,165 1060,130 1102,100` }
];
const N = 301, SIZE = 722, LEFT = 556, TOP = 105, K = N / SIZE;
const ctx = document.getElementById('patches').getContext('2d');
ctx.fillStyle = COLORS.m;
ctx.fillRect(0, 0, N, N);

// A slow ripple keeps long shape edges from looking ruled.
const ripple = (x, y) => Math.sin(y * 0.55 + x * 0.21) * 0.6 + Math.sin(y * 0.23 - x * 0.4) * 0.4;

function fillPolygon(pts) {
  for (let y = 0; y < N; y++) {
    const xs = [], c = y + 0.5;
    pts.forEach(([x1, y1], i) => {
      const [x2, y2] = pts[(i + 1) % pts.length];
      if ((y1 <= c) !== (y2 <= c)) xs.push(x1 + (c - y1) / (y2 - y1) * (x2 - x1));
    });
    xs.sort((a, b) => a - b);
    for (let i = 0; i + 1 < xs.length; i += 2) {
      const a = Math.round(xs[i] + ripple(xs[i], y)), b = Math.round(xs[i + 1] + ripple(xs[i + 1], y));
      if (b > a) ctx.fillRect(a, y, b - a, 1);
    }
  }
}
function strokeLine(pts) {
  for (let i = 0; i + 1 < pts.length; i++) {
    const [x1, y1] = pts[i], [x2, y2] = pts[i + 1];
    const n = Math.max(1, Math.ceil(Math.max(Math.abs(x2 - x1), Math.abs(y2 - y1))));
    for (let k = 0; k <= n; k++)
      ctx.fillRect(Math.floor(x1 + (x2 - x1) * k / n), Math.floor(y1 + (y2 - y1) * k / n), 1, 1);
  }
}
for (const { o, s, shapes } of SHEETS) {
  for (const line of shapes.trim().split('\n')) {
    const [key, ...rest] = line.trim().split(' ');
    const pts = rest.map(t => {
      const [x, y] = t.split(',').map(Number);
      return [(o[0] + x / s[0] - LEFT) * K, (o[1] + y / s[1] - TOP) * K];
    });
    ctx.fillStyle = COLORS[key.replace('~', '')];
    (key[0] === '~' ? strokeLine : fillPolygon)(pts);
  }
}
```
